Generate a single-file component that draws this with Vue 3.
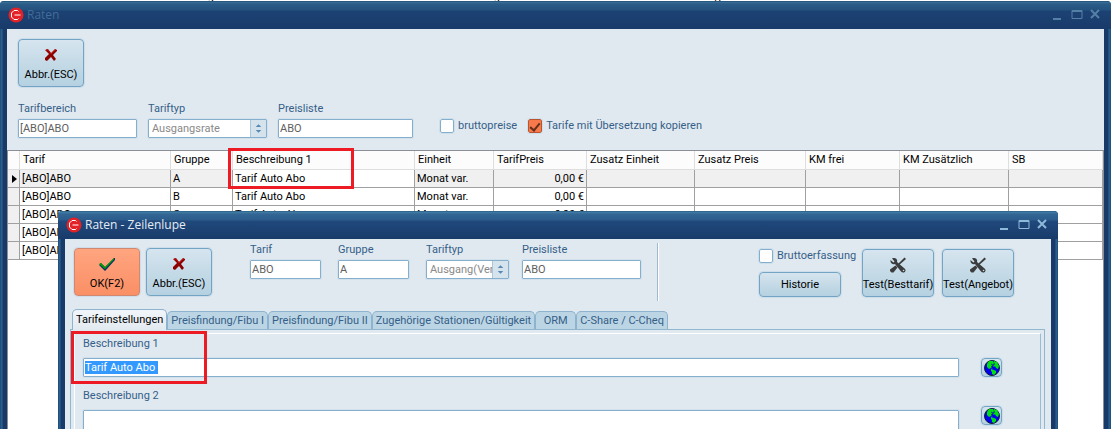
<script setup>
import { ref, onMounted } from 'vue'

const columns = ['Tarif', 'Gruppe', 'Beschreibung 1', 'Einheit', 'TarifPreis', 'Zusatz Einheit', 'Zusatz Preis', 'KM frei', 'KM Zusätzlich', 'SB']
const rows = ['A', 'B', 'C', 'D', 'E']
const tabs = ['Tarifeinstellungen', 'Preisfindung/Fibu I', 'Preisfindung/Fibu II', 'Zugehörige Stationen/Gültigkeit', 'ORM', 'C-Share / C-Cheq']

const activeTab = ref(0)
const brutto = ref(false)
const copyTranslated = ref(true)
const bruttoEntry = ref(false)
const desc1 = ref('Tarif Auto Abo ')
const desc2 = ref('')
const descInput = ref(null)

onMounted(() => {
  descInput.value.focus({ preventScroll: true })
  descInput.value.select()
})
</script>

<template>
  <svg class="defs" aria-hidden="true">
    <symbol id="logo" viewBox="0 0 16 16">
      <circle cx="8" cy="8" r="7.5" fill="#e32227" />
      <path d="M10.500 4.500L9.500 3.500H6L3.500 6V10L6 12.500H9.500L10.500 11.500M6.500 8H12.500" fill="none" stroke="#fff" />
    </symbol>
    <symbol id="cross" viewBox="0 0 16 16">
      <path d="M2 3l3-1 3 4 4-4 2 1v1l-4 4 3 4-2 2-3-4-4 4-2-1v-2l4-4z" fill="#8c0000" />
      <path d="M3 3h2l3 4 4-4h1" fill="none" stroke="#c01010" />
    </symbol>
    <symbol id="check" viewBox="0 0 18 16">
      <path d="M1 9l2-2 4 4 9-9h1v2L8 14l-1 1z" fill="#10306c" />
      <path d="M1 8l2-1 4 4 9-9v1.500L7 13z" fill="#00a000" />
    </symbol>
    <symbol id="tools" viewBox="0 0 16 16">
      <path d="M14.500 0.500L16 2 7.500 9.500 6.500 8.500z" fill="#3c3c3c" />
      <path d="M5.500 8.500l2 2-4 5H1.500L0 14v-1.500z" fill="#3c3c3c" />
      <path d="M2 1.500L4.500 4.500 3.500 5.500 0.500 3C0 6 2.500 8 5 7l6 7.500c2 2.500 6 0 4-2.500l-1-1L7 5c1-3-2-5-5-3.500z" fill="#3c3c3c" />
      <circle cx="13.500" cy="13.500" r="0.800" fill="#c8dde8" />
    </symbol>
    <symbol id="globe" viewBox="0 0 16 16">
      <circle cx="8" cy="8" r="7.500" fill="#0000f0" stroke="#102030" />
      <path d="M3 4l2-3h4l1 2-1 2H8v2l-1 1-2 1-1-1-1-1zM10 1l3 1 2 4-1 3-2-1-1-2-1 1-1-1 2-2-1-1zM7 9l3 1 2 1v2l-2 2-2-1v-2l-1-1z" fill="#00e010" />
      <path d="M7 4l2 1-2 2M7 8l2 1" fill="none" stroke="#183878" />
    </symbol>
  </svg>

  <div class="desktop">
    <div class="backdrop" aria-hidden="true">
      <span>Beschreibung</span><span>Buchungsdatum bis</span><span>Typ</span><span>SB</span>
    </div>

    <section class="window main-window">
      <header class="titlebar inactive">
        <svg class="logo"><use href="#logo" /></svg>
        <h1>Raten</h1>
        <svg class="controls" viewBox="0 0 48 12"><path d="M1 10h8" /><path class="thin" d="M20 1.500h10v8H20zM20 2.500h10" /><path d="M39 1l8 8M47 1l-8 8" /></svg>
      </header>
      <div class="content">
        <div class="toolbar">
          <button type="button" class="big"><svg><use href="#cross" /></svg>Abbr.(ESC)</button>
        </div>
        <div class="filters">
          <label class="field w119">Tarifbereich<input type="text" value="[ABO]ABO" readonly></label>
          <label class="field w119">Tariftyp
            <span class="select">
              <select><option>Ausgangsrate</option></select>
              <svg viewBox="0 0 16 17"><path d="M5 7l3-3 3 3zM5 10l3 3 3-3z" /></svg>
            </span>
          </label>
          <label class="field w135">Preisliste<input type="text" value="ABO" readonly></label>
          <label class="check first"><input type="checkbox" v-model="brutto">bruttopreise</label>
          <label class="check"><input type="checkbox" v-model="copyTranslated">Tarife mit Übersetzung kopieren</label>
        </div>
        <div class="grid">
          <table>
            <colgroup>
              <col class="c12"><col class="c151"><col class="c62"><col class="c182"><col class="c79"><col class="c93">
              <col class="c108"><col class="c111"><col class="c94"><col class="c109"><col>
            </colgroup>
            <thead>
              <tr>
                <th></th>
                <th v-for="(c, i) in columns" :key="c">{{ c }}<span v-if="i === 2" class="mark mark-column"></span></th>
              </tr>
            </thead>
            <tbody>
              <tr v-for="(r, i) in rows" :key="r" :class="{ current: i === 0 }">
                <td class="pointer"><svg v-if="i === 0" viewBox="0 0 5 8"><path d="M0 0l5 4-5 4z" /></svg></td>
                <td>[ABO]ABO</td>
                <td>{{ r }}</td>
                <td class="desc">Tarif Auto Abo</td>
                <td>Monat var.</td>
                <td class="price">0,00 €</td>
                <td></td><td></td><td></td><td></td><td></td>
              </tr>
            </tbody>
          </table>
        </div>
      </div>
    </section>

    <section class="window detail-window">
      <header class="titlebar">
        <svg class="logo"><use href="#logo" /></svg>
        <h1>Raten - Zeilenlupe</h1>
        <svg class="controls" viewBox="0 0 48 12"><path d="M1 10h8" /><path class="thin" d="M20 1.500h10v8H20zM20 2.500h10" /><path d="M39 1l8 8M47 1l-8 8" /></svg>
      </header>
      <div class="content">
        <div class="detail-bar">
          <div class="actions">
            <button type="button" class="big ok"><svg><use href="#check" /></svg>OK(F2)</button>
            <button type="button" class="big"><svg><use href="#cross" /></svg>Abbr.(ESC)</button>
          </div>
          <div class="detail-fields">
            <label class="field w71">Tarif<input type="text" value="ABO" readonly></label>
            <label class="field w71">Gruppe<input type="text" value="A" readonly></label>
            <label class="field w83">Tariftyp
              <span class="select">
                <select><option>Ausgang(Vermietung)</option></select>
                <svg viewBox="0 0 16 17"><path d="M5 7l3-3 3 3zM5 10l3 3 3-3z" /></svg>
              </span>
            </label>
            <label class="field w119 last">Preisliste<input type="text" value="ABO" readonly></label>
          </div>
          <div class="divider"></div>
          <div class="history">
            <label class="check"><input type="checkbox" v-model="bruttoEntry">Bruttoerfassung</label>
            <button type="button">Historie</button>
          </div>
          <div class="tests">
            <button type="button" class="big"><svg><use href="#tools" /></svg>Test(Besttarif)</button>
            <button type="button" class="big"><svg><use href="#tools" /></svg>Test(Angebot)</button>
          </div>
        </div>
        <div class="tabs" role="tablist">
          <button v-for="(t, i) in tabs" :key="t" type="button" role="tab" :aria-selected="activeTab === i"
            :class="{ active: activeTab === i }" @click="activeTab = i">{{ t }}</button>
        </div>
        <div class="panel">
          <div class="panel-inner">
            <div class="texts">
              <label for="desc1">Beschreibung 1</label>
              <input id="desc1" ref="descInput" type="text" v-model="desc1">
              <label for="desc2">Beschreibung 2</label>
              <textarea id="desc2" v-model="desc2"></textarea>
            </div>
            <div class="globes">
              <button v-for="n in 2" :key="n" type="button" class="globe" aria-label="Übersetzung"><svg><use href="#globe" /></svg></button>
            </div>
            <span class="mark mark-field"></span>
          </div>
        </div>
      </div>
    </section>
  </div>
</template>

<style>
body {
  overflow: hidden;
}
</style>

<style scoped>
* {
  box-sizing: border-box;
}

.defs {
  position: absolute;
  width: 0;
  height: 0;
}

.desktop {
  position: relative;
  height: 100vh;
  overflow: hidden;
  background: #fff;
  color: #000;
  font: 11px/14px Roboto, "Liberation Sans", sans-serif;
}

.desktop button,
.desktop input,
.desktop select,
.desktop textarea {
  font: inherit;
  margin: 0;
}

.backdrop {
  display: grid;
  grid-template-columns: 310px 250px 290px 1fr;
  align-content: end;
  height: 1px;
  padding-left: 147px;
  overflow: hidden;
  line-height: 8px;
}

.window {
  position: absolute;
  display: flex;
  flex-direction: column;
  padding: 0 7px;
  background: linear-gradient(90deg, #1d4a78, #2d6593 2px, #183a68 3px, #183a68 calc(100% - 3px), #2d6593 calc(100% - 2px), #1d4a78);
  border-radius: 4px 4px 0 0;
  overflow: hidden;
}

.main-window {
  inset: 1px 1px 0 0;
}

.detail-window {
  inset: 211px 54px 0 58px;
}

.titlebar {
  display: flex;
  flex: none;
  align-items: center;
  gap: 3px;
  height: 28px;
  margin: 0 -7px;
  padding: 0 11px 0 8px;
  background: linear-gradient(#1d4f72, #4480a8 1px, #336694 3px, #2b5c8b 9px, #20497c 10px, #193b6a);
}

.titlebar.inactive {
  background: linear-gradient(#123f60, #3a7099 1px, #2b5c87 3px, #24527f 9px, #1c4273 10px, #193b6a);
}

.titlebar h1 {
  flex: 1;
  margin: 0;
  color: #e4edf6;
  font: 12px/16px "Open Sans", sans-serif;
}

.inactive h1 {
  color: #416d98;
}

.logo {
  width: 16px;
  height: 16px;
}

.controls {
  width: 48px;
  height: 12px;
  fill: none;
  stroke: #8dbadb;
  stroke-width: 2;
}

.controls .thin {
  stroke-width: 1;
}

.inactive .controls {
  stroke: #5580a6;
}

.content {
  flex: 1;
  display: flex;
  flex-direction: column;
  background: #e1e9f0;
  min-height: 0;
}

.desktop button {
  height: 25px;
  padding: 0;
  border: 1px solid #74a4c4;
  border-radius: 4px;
  background: linear-gradient(#d6e5ef, #c6dbe7 45%, #b5d1e1);
  box-shadow: 0 0 1px 1px #cbdce9;
  color: #000;
  white-space: nowrap;
}

.desktop .big {
  display: flex;
  flex-direction: column;
  align-items: center;
  justify-content: flex-end;
  gap: 5px;
  width: 66px;
  height: 48px;
  padding-bottom: 4px;
}

.big svg {
  width: 18px;
  height: 16px;
}

.desktop .ok {
  border-color: #d08970;
  background: linear-gradient(#ffa580, #fa8f65);
}

.toolbar {
  padding: 10px 11px 0;
}

.filters {
  display: flex;
  align-items: flex-start;
  padding: 15px 11px 12px;
}

.field {
  display: flex;
  flex-direction: column;
  gap: 3px;
  margin-right: 11px;
  color: #355f88;
}

.field input,
.select,
.texts input,
.texts textarea {
  height: 19px;
  padding: 0 1px;
  border: 1px solid #85afcd;
  border-radius: 1px;
  outline: 1px solid #d3e1ec;
  background: #fff;
  color: #606060;
}

.field input {
  width: 100%;
}

.select {
  display: flex;
}

.select select {
  flex: 1;
  min-width: 0;
  padding: 0 0 0 2px;
  border: 0;
  appearance: none;
  background: #fff;
  color: #898989;
  overflow: hidden;
}

.select svg {
  width: 16px;
  height: 17px;
  margin-right: -1px;
  border-left: 1px solid #a9c6db;
  background: #d5e3ed;
  fill: #5688b4;
}

.check {
  display: flex;
  align-items: center;
  gap: 4px;
  height: 14px;
  color: #355f88;
  white-space: nowrap;
}

.filters .check {
  margin: 17px 11px 0 0;
}

.filters .first {
  margin-left: 16px;
}

.check input {
  appearance: none;
  display: grid;
  flex: none;
  place-items: center;
  width: 14px;
  height: 14px;
  border: 1px solid #83afcd;
  border-radius: 2px;
  outline: 1px solid #cddfea;
  background: #fff;
}

.check input:checked {
  border-color: #b95431;
  background: #f77a4c;
}

.check input:checked::after {
  content: "";
  width: 4px;
  height: 8px;
  border: solid #643019;
  border-width: 0 2px 2px 0;
  transform: rotate(40deg);
}

.w71 { width: 71px; }
.w83 { width: 83px; }
.w119 { width: 119px; }
.w135 { width: 135px; }
.c12 { width: 12px; }
.c62 { width: 62px; }
.c79 { width: 79px; }
.c93 { width: 93px; }
.c94 { width: 94px; }
.c108 { width: 108px; }
.c109 { width: 109px; }
.c111 { width: 111px; }
.c151 { width: 151px; }
.c182 { width: 182px; }

.grid {
  flex: 1;
  background: #fff;
  border: solid #8c8e98;
  border-width: 1px 1px 0;
}

table {
  width: 100%;
  table-layout: fixed;
  border-collapse: separate;
  border-spacing: 0;
}

th {
  position: relative;
  height: 19px;
  padding: 0 3px;
  border-right: 1px solid #dedede;
  border-bottom: 1px solid #dedede;
  background: #fcfcfc;
  font-weight: normal;
  text-align: left;
  white-space: nowrap;
}

td {
  height: 18px;
  padding: 0 2px;
  border-right: 1px solid #a0a0a0;
  border-bottom: 1px solid #a0a0a0;
  white-space: nowrap;
}

.current td,
.desktop .pointer {
  background: #f0f0f0;
}

.current .desc {
  background: #fff;
}

.price {
  text-align: right;
}

.pointer svg {
  display: block;
  width: 5px;
  height: 8px;
  margin-left: 2px;
}

.mark {
  position: absolute;
  z-index: 1;
  border: 3px solid #ed1c24;
  pointer-events: none;
}

.mark-column {
  left: -5px;
  top: -3px;
  width: 126px;
  height: 41px;
}

.detail-bar {
  display: flex;
  align-items: flex-start;
  padding: 4px 9px 12px;
}

.actions,
.tests {
  display: flex;
  gap: 6px;
  padding-top: 5px;
}

.detail-fields {
  display: flex;
  align-items: flex-start;
  margin-left: 38px;
}

.detail-fields .field {
  margin-right: 17px;
}

.detail-fields .w83 {
  margin-right: 13px;
}

.detail-fields .last {
  margin-right: 16px;
}

.divider {
  width: 2px;
  height: 58px;
  border-left: 1px solid #a0b8cd;
  background: #fff;
}

.history {
  display: flex;
  flex-direction: column;
  gap: 9px;
  width: 82px;
  margin: 6px 21px 0 100px;
}

.tests {
  gap: 8px;
  padding-top: 6px;
}

.desktop .tests .big {
  width: 72px;
}

.tabs {
  display: flex;
  align-items: flex-end;
  height: 16px;
  padding-left: 7px;
}

.desktop .tabs button {
  height: 18px;
  min-width: 41px;
  padding: 0 3px;
  border-color: #8eb3cf;
  border-bottom: 0;
  border-radius: 5px 5px 0 0;
  background: #bcd5e4;
  box-shadow: none;
  color: #355f88;
}

.desktop .tabs .active {
  height: 21px;
  padding: 0 3px;
  margin-bottom: -1px;
  z-index: 1;
  background: linear-gradient(#f2f6fa, #e1e9f0);
  color: #000;
}

.panel {
  flex: 1;
  margin: 0 6px 0 5px;
  padding: 3px 3px 0;
  border: solid #91b6d0;
  border-width: 1px 1px 0;
}

.panel-inner {
  position: relative;
  display: flex;
  gap: 22px;
  height: 100%;
  padding: 3px 38px 0 8px;
  border: solid #fff;
  border-width: 1px 1px 0;
  border-right-color: #9bbbd3;
}

.texts {
  flex: 1;
  display: flex;
  flex-direction: column;
}

.texts label {
  color: #355f88;
}

.texts input,
.texts textarea {
  width: 100%;
  margin: 7px 0 12px;
  resize: none;
}

.texts textarea {
  height: 40px;
  flex: none;
}

#desc1::selection {
  background: #3399ff;
  color: #fff;
}

.globes {
  display: flex;
  flex-direction: column;
  gap: 29px;
  padding-top: 21px;
}

.desktop .globe {
  display: grid;
  place-items: center;
  width: 21px;
  height: 19px;
}

.globe svg {
  width: 16px;
  height: 16px;
}

.mark-field {
  left: -4px;
  top: -3px;
  width: 136px;
  height: 53px;
}
</style>
